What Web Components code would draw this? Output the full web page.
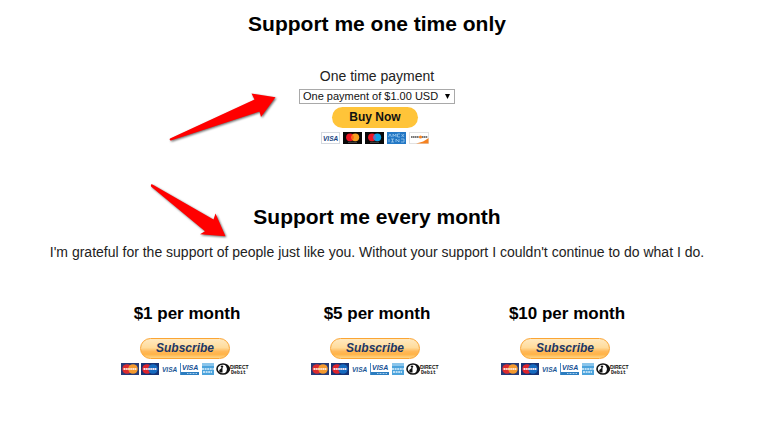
<!DOCTYPE html>
<html lang="en">
<head>
<meta charset="utf-8">
<meta name="viewport" content="width=device-width, initial-scale=1">
<title>Support me</title>
<style>
  body {
    margin: 0;
    padding-right: 14px;
    background: #fff;
    color: #222;
    font-family: "Liberation Sans", Arial, sans-serif;
  }
</style>
</head>
<body>
<support-section heading="Support me one time only">
  <red-arrow slot="pointer" direction="up"></red-arrow>
  <one-time-payment></one-time-payment>
</support-section>

<support-section heading="Support me every month">
  <red-arrow slot="pointer" direction="down"></red-arrow>
  <p slot="intro">I'm grateful for the support of people just like you. Without your support I couldn't continue to do what I do.</p>
  <plan-list>
    <monthly-plan>$1 per month</monthly-plan>
    <monthly-plan>$5 per month</monthly-plan>
    <monthly-plan>$10 per month</monthly-plan>
  </plan-list>
</support-section>

<script>
class SupportSection extends HTMLElement {
  connectedCallback() {
    this.attachShadow({ mode: "open" });
    this.shadowRoot.innerHTML = `
      <style>
        :host {
          display: block;
          position: relative;
          padding-top: 10px;
          min-height: 183px;
          text-align: center;
        }

        h2 {
          margin: 0;
          font-size: 21px;
          line-height: 28px;
          font-weight: 700;
          color: #000;
        }

        ::slotted(p) {
          margin: 11px 0 0;
          font-size: 14px;
          line-height: 20px;
        }
      </style>

      <section>
        <h2></h2>
        <slot name="intro"></slot>
        <slot></slot>
      </section>
      <slot name="pointer"></slot>
    `;
    this.shadowRoot.querySelector("h2").textContent = this.getAttribute("heading");
  }
}

class OneTimePayment extends HTMLElement {
  connectedCallback() {
    this.attachShadow({ mode: "open" });
    this.shadowRoot.innerHTML = `
      <style>
        :host {
          display: block;
          padding-top: 28px;
        }

        form, .pay {
          display: flex;
          flex-direction: column;
          align-items: center;
        }

        .pay {
          padding-right: 4px;
        }

        label {
          font-size: 14px;
          line-height: 20px;
          margin-bottom: 3px;
        }

        .select {
          display: grid;
          align-items: center;
          width: 156px;
        }

        select, .select svg {
          grid-area: 1 / 1;
        }

        select {
          appearance: none;
          width: 100%;
          height: 15px;
          padding: 0 3px;
          border: 1px solid #a9a9a9;
          border-radius: 0;
          background: #fff;
          color: #111;
          font: 11px/13px "Liberation Sans", Arial, sans-serif;
        }

        .select svg {
          justify-self: end;
          margin-right: 5px;
          pointer-events: none;
        }

        button {
          width: 86px;
          height: 21px;
          margin: 3px 0 4px;
          padding: 0;
          border: 0;
          border-radius: 11px;
          background: #ffc439;
          color: #111;
          font: 700 12px/21px "Liberation Sans", Arial, sans-serif;
          cursor: pointer;
        }
      </style>

      <form>
        <label for="amount">One time payment</label>
        <div class="select">
          <select id="amount">
            <option>One payment of $1.00 USD</option>
          </select>
          <svg width="5" height="5" viewBox="0 0 5 5"><path d="M0 0h5L2.5 5z" fill="#000"/></svg>
        </div>
        <div class="pay">
          <button type="button">Buy Now</button>
          <card-row kind="flat"></card-row>
        </div>
      </form>
    `;
  }
}

class PlanList extends HTMLElement {
  connectedCallback() {
    this.attachShadow({ mode: "open" });
    this.shadowRoot.innerHTML = `
      <style>
        :host {
          display: grid;
          grid-template-columns: repeat(3, 1fr);
          padding: 42px 92px 0;
        }
      </style>
      <slot></slot>
    `;
  }
}

class MonthlyPlan extends HTMLElement {
  connectedCallback() {
    this.attachShadow({ mode: "open" });
    this.shadowRoot.innerHTML = `
      <style>
        :host, .pay {
          display: flex;
          flex-direction: column;
          align-items: center;
        }

        .pay {
          padding-right: 4px;
        }

        h3 {
          margin: 0 0 14px;
          font-size: 17px;
          line-height: 20px;
          font-weight: 700;
          color: #000;
        }

        button {
          width: 90px;
          height: 21px;
          margin-bottom: 4px;
          padding: 0;
          border: 1px solid #fba534;
          border-radius: 11px;
          background: linear-gradient(#ffe9c0, #ffdc9c 45%, #ffb95a 65%, #ffb347 80%, #ffd584);
          color: #1c3664;
          font: italic 700 12px/19px "Liberation Sans", Arial, sans-serif;
          cursor: pointer;
        }
      </style>

      <h3><slot></slot></h3>
      <div class="pay">
        <button type="button">Subscribe</button>
        <card-row kind="classic"></card-row>
      </div>
    `;
  }
}

// Accepted payment cards shown below a button
class CardRow extends HTMLElement {
  connectedCallback() {
    this.attachShadow({ mode: "open" });
    this.shadowRoot.innerHTML = `
      <style>
        :host {
          display: block;
          height: 12px;
        }

        svg {
          display: block;
          font-family: "Liberation Sans", Arial, sans-serif;
          font-weight: 700;
        }
      </style>
      ${this.getAttribute("kind") === "flat" ? this.flat() : this.classic()}
    `;
  }

  flat() {
    return `
      <svg width="108" height="12" viewBox="0 0 108 12" role="img" aria-label="Accepted cards">
        <rect x=".5" y=".5" width="18" height="11" fill="#fff" stroke="#d5d9df"/>
        <text x="2" y="8.5" font-size="6.5" font-style="italic" fill="#17437f">VISA</text>

        <rect x="22" width="19" height="12" fill="#080808"/>
        <circle cx="29" cy="5.3" r="3.9" fill="#eb1624"/>
        <circle cx="34.3" cy="5.3" r="3.9" fill="#f5a021"/>
        <path d="M31.6 2.7a3.7 3.7 0 0 1 0 5.2a3.7 3.7 0 0 1 0-5.2" fill="#ff6417"/>
        <path d="M27 10.3h9" stroke="#777" stroke-width=".6"/>

        <rect x="44" width="19" height="12" fill="#080808"/>
        <circle cx="51" cy="5.3" r="3.9" fill="#eb1624"/>
        <circle cx="56.3" cy="5.3" r="3.9" fill="#0ba0e4"/>
        <path d="M53.6 2.7a3.7 3.7 0 0 1 0 5.2a3.7 3.7 0 0 1 0-5.2" fill="#6c6bbd"/>
        <path d="M49 10.3h9" stroke="#777" stroke-width=".6"/>

        <rect x="66" width="19" height="12" fill="#2478c5"/>
        <path d="M67.5 5l1.5-3 1.5 3M72 5V2l1.5 2L75 2v3M79 2h-2.5v3H79M80.5 2l2.5 3M83 2l-2.5 3M68 10V7M70 7h3M70 10h3M71.5 7v3M75 10V7l3 3V7M80 7h3v3h-3" fill="none" stroke="#a9d2f2" stroke-width=".7"/>

        <rect x="88.5" y=".5" width="19" height="11" fill="#fff" stroke="#e2e2e2"/>
        <path d="M107.5 6v5.5H95q8-1.500 12.5-5.5" fill="#f58220"/>
        <path d="M90 5h8M101 5h5.500" stroke="#777" stroke-width="2" stroke-dasharray="1.500 .4"/>
        <circle cx="99.5" cy="5" r="1.600" fill="#f58220"/>
      </svg>
    `;
  }

  classic() {
    return `
      <svg width="128" height="12" viewBox="0 0 128 12" role="img" aria-label="Accepted cards">
        <rect width="18" height="12" fill="#263b78"/>
        <circle cx="6" cy="6" r="4.8" fill="#dc2c2f"/>
        <circle cx="12" cy="6" r="4.8" fill="#f49a2e"/>
        <path d="M2.5 6h13" stroke="#ffe3d0" stroke-width="1.8" stroke-dasharray="1.5 .4"/>

        <rect x="20" width="18" height="12" fill="#173375"/>
        <circle cx="26" cy="6" r="4.8" fill="#de252d"/>
        <circle cx="32" cy="6" r="4.8" fill="#176bc0"/>
        <path d="M22.5 6h13" stroke="#f5e4f0" stroke-width="1.8" stroke-dasharray="1.5 .4"/>

        <text x="41" y="8.5" font-size="6.5" font-style="italic" fill="#1c5695">VISA</text>

        <path d="M59.5 0v12" stroke="#4c92cf"/>
        <text x="61" y="7" font-size="7" font-style="italic" fill="#154f93">VISA</text>
        <rect x="60" y="9" width="18" height="3" fill="#2b7dc0"/>
        <path d="M66 10.5h10" stroke="#a5cdec" stroke-dasharray="1 .5"/>

        <rect x="81" width="12" height="12" fill="#4ca3dc"/>
        <path d="M81 0h12v3H81z" fill="#8bc5eb"/>
        <path d="M81 6h12M82 9h9" stroke="#e0f2fd" stroke-width="1.5" stroke-dasharray="2 .6"/>

        <ellipse cx="102" cy="6" rx="6" ry="5" fill="#fff" stroke="#111" stroke-width="1.6"/>
        <path d="M103 1q6 1 6 5t-6 5q3-2 3-5t-3-5" fill="#111"/>
        <path d="M101.5 4v5.500h-2.500q-2-2 .5-3.500z" fill="#111"/>
        <circle cx="101" cy="3.600" r="1.200" fill="#111"/>
        <text x="109" y="5.5" font-size="5" fill="#111">DIRECT</text>
        <text x="110" y="10.5" font-size="5" fill="#111" font-family="Liberation Mono, monospace">Debit</text>
      </svg>
    `;
  }
}

class RedArrow extends HTMLElement {
  connectedCallback() {
    const up = this.getAttribute("direction") === "up";
    this.attachShadow({ mode: "open" });
    this.shadowRoot.innerHTML = `
      <style>
        :host {
          position: absolute;
          top: ${up ? 90 : -13}px;
          left: calc(50% - ${up ? 212 : 232}px);
          pointer-events: none;
        }

        svg {
          display: block;
          overflow: visible;
          filter: drop-shadow(1px 1px 1px rgba(0, 0, 0, 0.6));
        }
      </style>

      <svg width="120" height="60" viewBox="0 0 120 60" aria-hidden="true">
        <path fill="#f00" d="${up
          ? "M5 48.5L89.5 9.5L86.5 3.5L110.5 7.3L96 27L94.5 21.500L6 50.5Q4 50.5 5 48.5"
          : "M7.5 4.5L68.5 39.500L70.5 33.500L80.5 56.2L55 54.200L60 51.200L6 6.500Q5.500 3.500 7.500 4.500"}"/>
      </svg>
    `;
  }
}

customElements.define("card-row", CardRow);
customElements.define("red-arrow", RedArrow);
customElements.define("one-time-payment", OneTimePayment);
customElements.define("monthly-plan", MonthlyPlan);
customElements.define("plan-list", PlanList);
customElements.define("support-section", SupportSection);
</script>
</body>
</html>
